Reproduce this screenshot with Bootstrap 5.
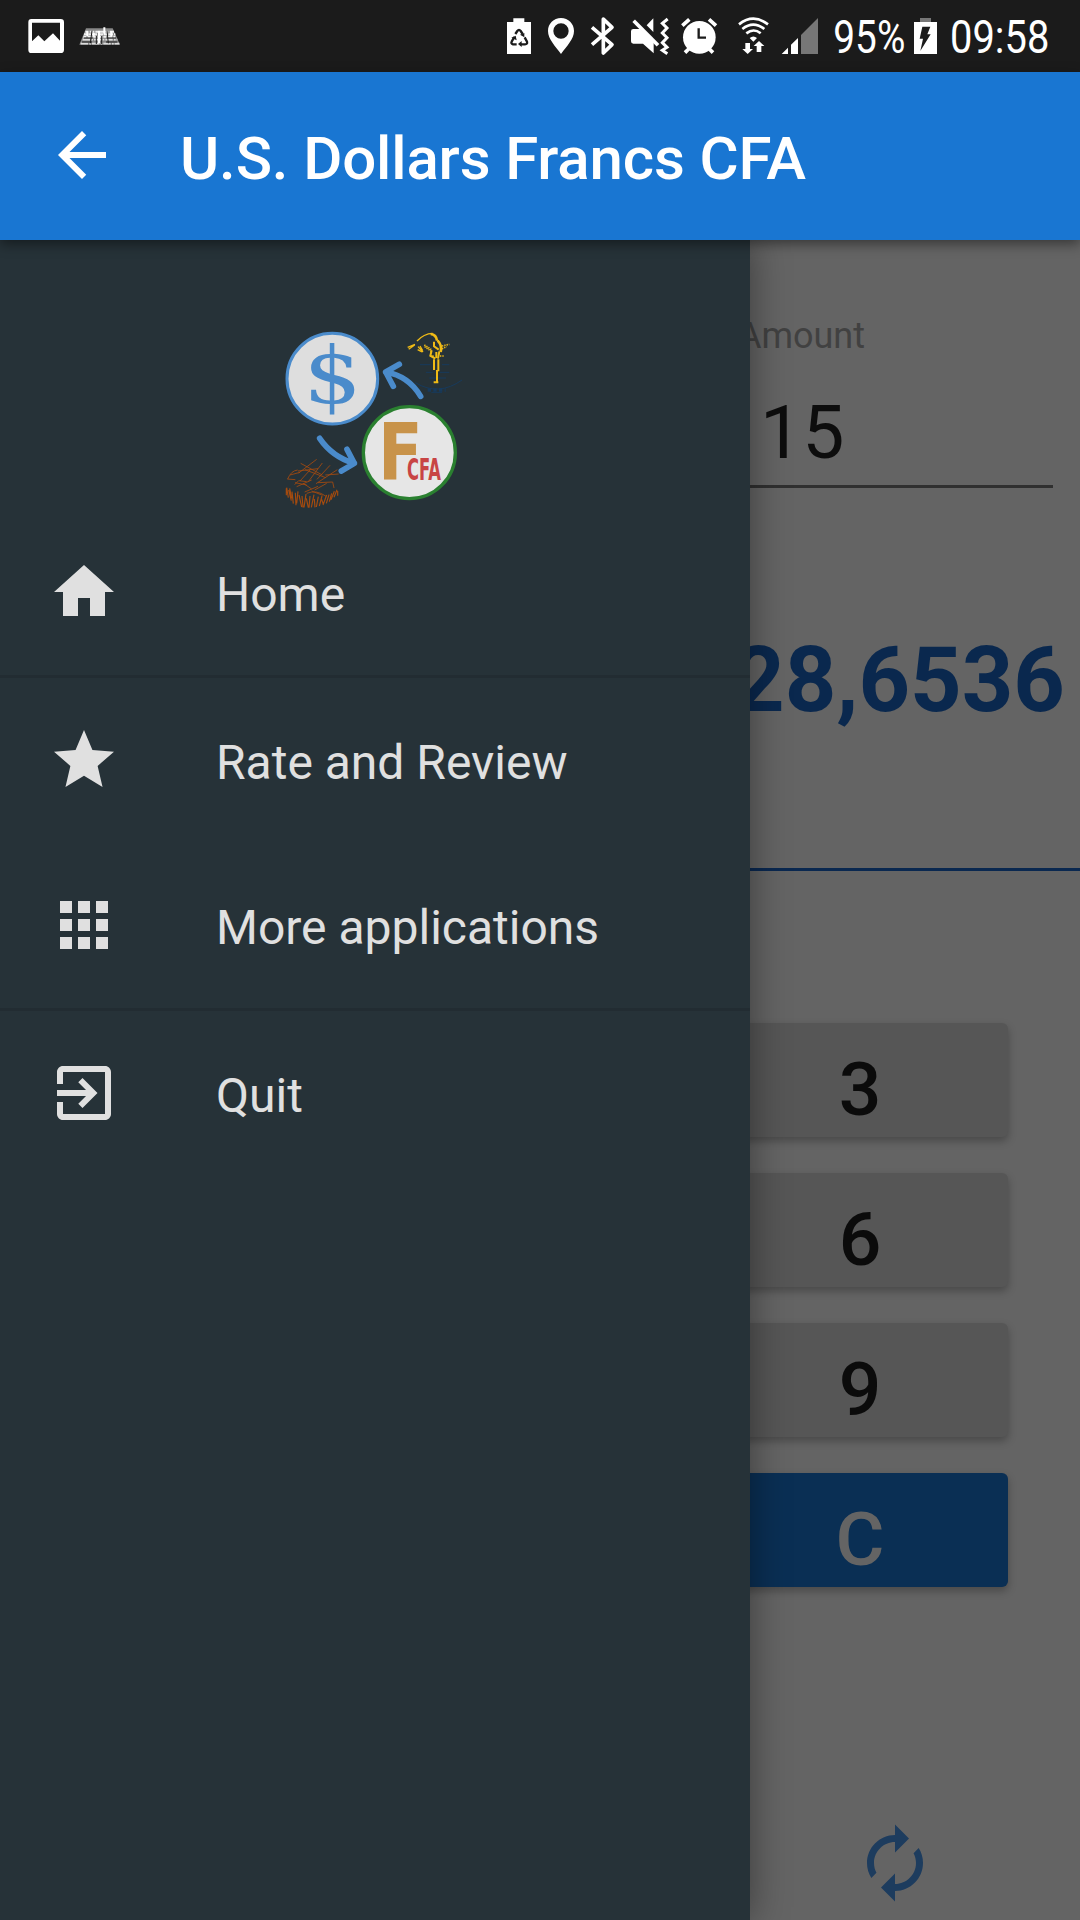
<!DOCTYPE html>
<html lang="en">
<head>
    <meta charset="UTF-8">
    <meta name="viewport" content="width=device-width, initial-scale=1.0">
    <link href="https://cdn.jsdelivr.net/npm/bootstrap@5.3.3/dist/css/bootstrap.min.css" rel="stylesheet">
    <title>U.S. Dollars Francs CFA</title>
    <style>
        body {
            font-family: Roboto, "Liberation Sans", sans-serif;
            background-color: #646464;
            width: 1080px;
            height: 1920px;
            overflow: hidden;
        }

        svg {
            display: block;
            flex: none;
            overflow: visible;
        }

        .status-bar {
            height: 72px;
            background-color: #1b1b1b;
        }

        .status-bar text {
            font-size: 136px;
            fill: #fff;
        }

        .app-bar {
            height: 168px;
            background-color: #1976d2;
            padding-left: 46px;
            z-index: 3;
            box-shadow: 0 4px 12px rgba(0, 0, 0, 0.45);
        }

        .app-bar svg {
            margin-bottom: 2px;
        }

        .app-title {
            font-size: 60px;
            font-weight: 500;
            line-height: 72px;
            letter-spacing: -0.14px;
            margin: 5px 0 0 62px;
        }

        .drawer {
            width: 750px;
            background-color: #263238;
            z-index: 2;
            box-shadow: 0 0 36px rgba(0, 0, 0, 0.42);
        }

        .drawer-head {
            height: 270px;
            padding-top: 80px;
        }

        .menu-row {
            height: 165px;
            padding: 46px 0 0 48px;
            color: #e0e0e0;
            font-size: 48px;
            line-height: 72px;
            text-decoration: none;
        }

        .menu-row span {
            margin: 3px 0 0 96px;
        }

        .menu-line {
            height: 3px;
            background-color: #222c32;
        }

        .converter {
            min-width: 0;
        }

        .amount-label {
            font-size: 36px;
            line-height: 44px;
            color: #414141;
            margin-top: 74px;
            padding-right: 215px;
        }

        .amount-value {
            font-size: 75px;
            line-height: 88px;
            color: #0d0d0d;
            margin: 30px 27px 0 0;
            padding: 0 0 9px 10px;
            border-bottom: 3px solid #303030;
        }

        .converted {
            font-size: 90px;
            font-weight: 700;
            line-height: 100px;
            color: #0a284e;
            margin-top: 143px;
            padding-right: 15px;
        }

        .result-line {
            height: 3px;
            background-color: #0a2850;
            margin-top: 137px;
        }

        .keypad {
            margin: 152px 72px 0 -38px;
            gap: 36px;
        }

        .keypad .btn {
            height: 114px;
            padding: 18px 0 0;
            border: 0;
            border-radius: 6px;
            background-color: #565656;
            color: #0b0b0b;
            font-size: 75px;
            font-weight: 500;
            line-height: 96px;
            box-shadow: 0 4px 8px rgba(0, 0, 0, 0.28);
        }

        .keypad .key-clear {
            background-color: #0a2f54;
            color: #646464;
        }

        .refresh {
            margin: 234px 0 0 103px;
        }
    </style>
</head>
<body class="d-flex flex-column">
    <header class="status-bar d-flex justify-content-between flex-shrink-0">
        <div class="d-flex">
            <!-- gallery -->
            <svg width="70" height="72" viewBox="0 0 210 216">
                <path fill="#fff" fill-rule="evenodd" d="M94 57h88q10 0 10 10v82q0 10-10 10H94q-9 0-9-10V67q0-10 9-10zM96 68v56l19-18 18 18 26-24 21 22V68z"/>
            </svg>
            <!-- keyboard -->
            <svg width="60" height="72" viewBox="210 0 180 216">
                <path fill="#888" d="M258 85h80l22 49H238z"/>
                <path stroke="#eee" stroke-width="6" stroke-dasharray="9 4 14 3" d="M256 95h86M252 103h94M250 110h96"/>
                <path stroke="#ddd" stroke-width="5" stroke-dasharray="22 4 5 3" d="M248 119h104M242 131h116"/>
                <path stroke="#1b1b1b" stroke-width="3" d="M252 114h26M320 114h28M246 126h30M318 126h34M276 92l-5 38M289 108v24M305 108v24M321 92l4 38"/>
                <path stroke="#fff" stroke-width="6" d="M297 92v38M281 98v12M313 82v22M262 94v15M334 94v15"/>
            </svg>
        </div>
        <div class="d-flex">
            <!-- power saving -->
            <svg width="38" height="72" viewBox="30 0 114 216">
                <path fill="#fff" d="M51 66h19V55h33v11h20v96H51z"/>
                <path fill="none" stroke="#1b1b1b" stroke-width="7" d="M76 102l6-9q5-7 10 0l6 9M104 112l7 13q2 8-6 8H92M80 133h-11q-7-2-4-8l8-14"/>
                <path fill="#1b1b1b" d="M90 104l13-5v13zM95 123v18l-11-9zM64 113l13-6 3 14z"/>
            </svg>
            <!-- location -->
            <svg width="45" height="72" viewBox="144 0 135 216">
                <path fill="#fff" fill-rule="evenodd" d="M213 54c22 0 39 17 39 39 0 25-22 45-39 69-17-24-39-44-39-69 0-22 17-39 39-39zm0 16a23 23 0 1 0 0 46 23 23 0 0 0 0-46z"/>
            </svg>
            <!-- bluetooth -->
            <svg width="40" height="72" viewBox="279 0 120 216">
                <path fill="none" stroke="#fff" stroke-width="11" stroke-linejoin="round" d="M306 82l60 52-26 25V57l26 25-60 52"/>
            </svg>
            <!-- vibrate, sound off -->
            <svg width="52" height="72" viewBox="399 0 156 216">
                <path fill="#fff" d="M490 55v41l-20-20zM430 87h20l41 36v37l-32-29h-29q-7 0-7-7V94q0-7 7-7z"/>
                <path stroke="#1b1b1b" stroke-width="8" d="M437 56l72 72"/>
                <path stroke="#fff" stroke-width="11" d="M431 62l73 74"/>
                <path fill="none" stroke="#fff" stroke-width="9" d="M533 57l-16 13 14 14-14 15 14 14-14 15 14 14-14 9 15 10"/>
            </svg>
            <!-- alarm -->
            <svg width="52" height="72" viewBox="555 0 156 216">
                <circle cx="628" cy="112" r="49" fill="#fff"/>
                <path stroke="#fff" stroke-width="11" d="M577 77l21-19M678 77l-21-19M585 158l14-14M669 158l-14-14"/>
                <path fill="none" stroke="#1b1b1b" stroke-width="7" d="M626 85v28h22"/>
            </svg>
            <!-- wifi -->
            <svg width="53" height="72" viewBox="711 0 159 216">
                <path fill="none" stroke="#fff" stroke-width="8" d="M747 73q43-34 87 0M757 87q33-26 66 0M769 100q22-17 43 0"/>
                <path fill="#fff" d="M779 114q11-9 22 0l-11 11zM766 129h14v18h9l-16 15-16-15h9zM800 156v-18h-9l16-15 16 15h-9v18z"/>
            </svg>
            <!-- mobile signal -->
            <svg width="45" height="72" viewBox="0 0 135 216">
                <path fill="#fff" d="M5 162l19-19v19zM33 162v-28l21-20v48z"/>
                <path fill="#777" d="M63 162v-57l51-51v108z"/>
            </svg>
            <svg width="85" height="72" viewBox="135 0 255 216">
                <text x="160" y="160" textLength="216" lengthAdjust="spacingAndGlyphs">95%</text>
            </svg>
            <!-- battery, charging -->
            <svg width="35" height="72" viewBox="390 0 105 216">
                <path fill="#777" d="M420 54h33v12h-33z"/>
                <path fill="#fff" d="M402 66h69v96h-69z"/>
                <path fill="#1b1b1b" d="M427 80h24l-9 23h10l-31 50 8-37h-10z"/>
            </svg>
            <svg width="135" height="72" viewBox="495 0 405 216">
                <text x="510" y="160" textLength="298" lengthAdjust="spacingAndGlyphs">09:58</text>
            </svg>
        </div>
    </header>

    <nav class="app-bar d-flex align-items-center text-white position-relative flex-shrink-0">
        <svg width="72" height="72" viewBox="0 0 24 24" fill="#fff"><path d="M20 11H7.830l5.590-5.590L12 4l-8 8 8 8 1.410-1.410L7.830 13H20v-2z"/></svg>
        <h1 class="app-title">U.S. Dollars Francs CFA</h1>
    </nav>

    <div class="d-flex flex-grow-1">
        <aside class="drawer position-relative flex-shrink-0">
            <div class="drawer-head d-flex justify-content-center">
                <svg width="210" height="200" viewBox="0 0 630 600">
                    <circle cx="187" cy="176" r="136" fill="#dedede" stroke="#4a8bcb" stroke-width="9"/>
                    <text x="100" y="249" font-family="DejaVu Serif" font-size="237" fill="#4a8bcb" textLength="176" lengthAdjust="spacingAndGlyphs">$</text>
                    <circle cx="418" cy="398" r="138" fill="#e6e6e6" stroke="#2a8030" stroke-width="10"/>
                    <text x="324" y="477" font-family="DejaVu Sans" font-weight="700" font-size="235" fill="#c8934a" textLength="134" lengthAdjust="spacingAndGlyphs">F</text>
                    <text x="411" y="481" font-family="DejaVu Sans" font-weight="700" font-size="89" fill="#c84444" textLength="102" lengthAdjust="spacingAndGlyphs">CFA</text>
                    <g fill="none" stroke="#4a8bcb" stroke-width="17" stroke-linecap="round" stroke-linejoin="round">
                        <path d="M149 355Q187 411 253 430M231 388L253 430L214 453"/>
                        <path d="M452 229Q416 168 347 156M388 133L347 156L370 199"/>
                    </g>
                    <!-- fisherman emblem -->
                    <g fill="none" stroke="#173a5c" stroke-width="3">
                        <path d="M436 188q70 42 140-8M450 134h32M516 134h22M468 157h20M510 157h28M478 174h50M484 217h32"/>
                        <path stroke-width="10" stroke-dasharray="10 7" d="M473 210h54"/>
                    </g>
                    <g fill="none" stroke="#f0bb16">
                        <path stroke-width="4" d="M441 63q20-22 47-23M413 82l22-9M416 88l18-13M444 80l15 16M450 78l8 14M443 89l13 7"/>
                        <path stroke-width="8" d="M482 42q17 2 19 20M503 62q14 14 9 34"/>
                        <path stroke-width="6" d="M492 65v14l14 10M485 91l-4 16 15 9M508 94l-4 22"/>
                        <path stroke-width="5" stroke-dasharray="4 3" d="M463 75l23 15M464 80l20 14M516 78l22-5M516 86l14-6M480 108h12M510 108h12"/>
                        <path stroke-width="6" d="M492 118v32M505 118v36M499 96v18M501 150v37M491 187h14"/>
                    </g>
                    <!-- reeds emblem -->
                    <g fill="none" stroke="#a64b0e" stroke-width="2.500">
                        <path d="M140 418L86 459M157 429l-42 56M180 436l-39 42M202 449l-64 42M92 430l65 35M105 449l62 24M84 453l60-7M53 477q10-25 30-27M52 477l24 2M120 450l-30 33M166 465l40-3M75 488l35 7M80 500l45-20M100 490l25 17M104 516l40-17M125 513l33 13M144 488l44-2 4 18M170 490l-36 20M110 520q30-12 58 9M60 465l30-8M74 494l12-12 24 3"/>
                        <path stroke-width="3.500" d="M50 503l5 30M56 510l8 32M66 515l4 36M65 535l-6-30M76 518l2 38M84 514l-4 36M87 525l8 36M96 528l3 34M108 522l-6 40M109 535l6 28M120 528l-3 35M132 524l-8 38M133 537l2 25M145 530l-6 31M156 528l-8 30M155 538l5 15M170 525l-11 30M177 524l-8 26M185 520l-7 25M193 514l-10 25M201 509l-9 23M203 513v14M49 505v21"/>
                    </g>
                </svg>
            </div>
            <a class="menu-row d-flex align-items-start" href="#">
                <svg width="72" height="72" viewBox="0 0 24 24" fill="#e0e0e0"><path d="M10 20v-6h4v6h5v-8h3L12 3 2 12h3v8z"/></svg>
                <span>Home</span>
            </a>
            <div class="menu-line"></div>
            <a class="menu-row d-flex align-items-start" href="#">
                <svg width="72" height="72" viewBox="0 0 24 24" fill="#e0e0e0"><path d="M12 17.270L18.180 21l-1.640-7.030L22 9.240l-7.190-.61L12 2 9.190 8.630 2 9.240l5.460 4.730L5.820 21z"/></svg>
                <span>Rate and Review</span>
            </a>
            <a class="menu-row d-flex align-items-start" href="#">
                <svg width="72" height="72" viewBox="0 0 24 24" fill="#e0e0e0"><path d="M4 8h4V4H4v4zm6 12h4v-4h-4v4zm-6 0h4v-4H4v4zm0-6h4v-4H4v4zm6 0h4v-4h-4v4zm6-10v4h4V4h-4zm-6 4h4V4h-4v4zm6 6h4v-4h-4v4zm0 6h4v-4h-4v4z"/></svg>
                <span>More applications</span>
            </a>
            <div class="menu-line"></div>
            <a class="menu-row d-flex align-items-start" href="#">
                <svg width="72" height="72" viewBox="0 0 24 24" fill="#e0e0e0"><path d="M10.090 15.590L11.500 17l5-5-5-5-1.410 1.410L12.670 11H3v2h9.670l-2.580 2.590zM19 3H5c-1.110 0-2 .9-2 2v4h2V5h14v14H5v-4H3v4c0 1.100.89 2 2 2h14c1.100 0 2-.9 2-2V5c0-1.100-.9-2-2-2z"/></svg>
                <span>Quit</span>
            </a>
        </aside>

        <main class="converter d-flex flex-column flex-grow-1">
            <div class="amount-label d-flex justify-content-end">Amount</div>
            <div class="amount-value">15</div>
            <div class="converted d-flex justify-content-end">28,6536</div>
            <div class="result-line"></div>
            <div class="keypad d-grid">
                <button type="button" class="btn">3</button>
                <button type="button" class="btn">6</button>
                <button type="button" class="btn">9</button>
                <button type="button" class="btn key-clear">C</button>
            </div>
            <svg class="refresh" width="84" height="84" viewBox="0 0 24 24" fill="#1d3c5e"><path d="M12 6v3l4-4-4-4v3c-4.420 0-8 3.580-8 8 0 1.570.46 3.030 1.240 4.260L6.700 14.800c-.45-.83-.7-1.790-.7-2.800 0-3.310 2.690-6 6-6zm6.760 1.740L17.300 9.200c.44.840.7 1.790.7 2.800 0 3.310-2.690 6-6 6v-3l-4 4 4 4v-3c4.420 0 8-3.580 8-8 0-1.570-.46-3.030-1.240-4.260z"/></svg>
        </main>
    </div>

    <script src="https://cdn.jsdelivr.net/npm/bootstrap@5.3.3/dist/js/bootstrap.bundle.min.js"></script>
</body>
</html>
